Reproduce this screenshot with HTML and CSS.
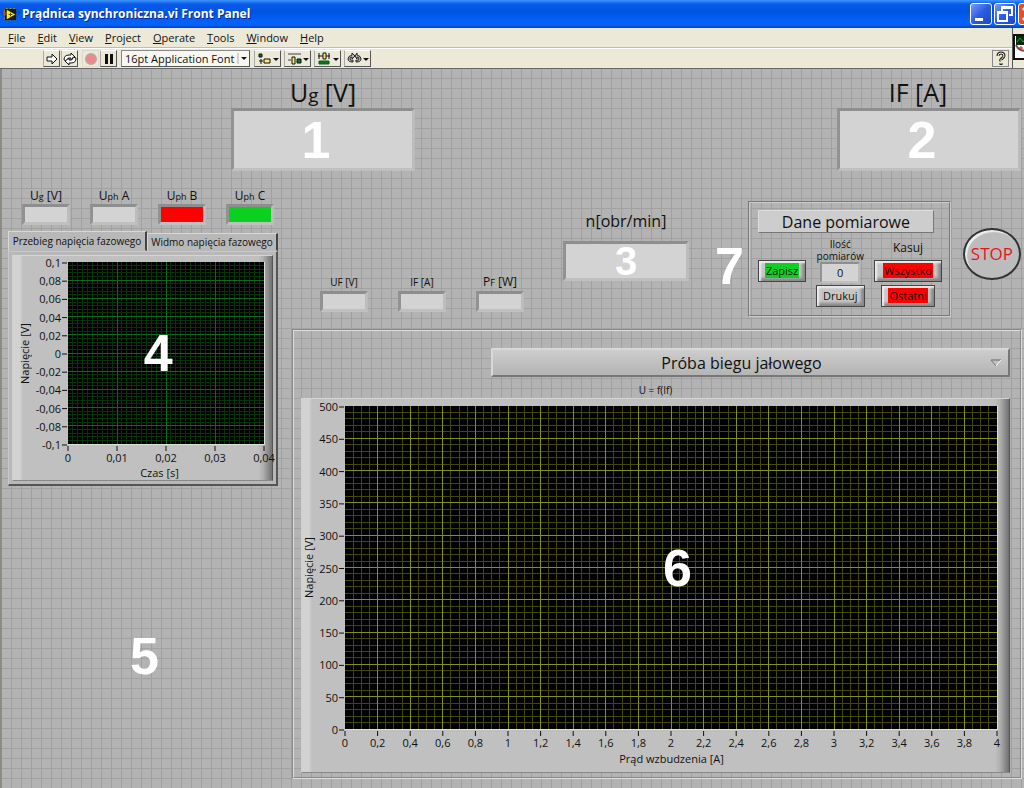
FILE: index.html
```html
<!DOCTYPE html>
<html lang="pl">
<head>
<meta charset="utf-8">
<title>Prądnica synchroniczna.vi Front Panel</title>
<link rel="stylesheet" href="styles.css">
</head>
<body>
<header class="titlebar">
  <svg class="app-icon" viewBox="0 0 16 16" aria-hidden="true">
    <path d="M1 4h14M1 8h14M1 12h14M4 1v14M8 1v14M12 1v14" stroke="#b8a020" stroke-width="2" stroke-dasharray="1 1"/>
    <rect x="2" y="2" width="12" height="12" fill="#1c1c08"/>
    <path d="M4 3l9 5-9 5z" fill="#ffe818"/><path d="M6 8h4M8 6v4" stroke="#4a4000"/>
    <path d="M0 6h3v3" stroke="#e04020" fill="none"/>
  </svg>
  <h1 class="title">Prądnica synchroniczna.vi Front Panel</h1>
  <button class="win-btn" aria-label="Minimize"><svg viewBox="0 0 20 20"><rect x="4" y="14" width="8" height="3" fill="#fff"/></svg></button>
  <button class="win-btn" aria-label="Restore"><svg viewBox="0 0 20 20"><path d="M7 7V3h10v8h-3M7 4h10" fill="none" stroke="#fff" stroke-width="2"/><path d="M3 8h9v9H3zM3 9h9" fill="none" stroke="#fff" stroke-width="2"/></svg></button>
  <button class="win-btn close" aria-label="Close"><svg viewBox="0 0 20 20"><path d="M4 4l12 12M16 4L4 16" stroke="#fff" stroke-width="3"/></svg></button>
</header>
<div class="bars">
  <div class="bars-main">
    <nav class="menubar">
      <button><u>F</u>ile</button><button><u>E</u>dit</button><button><u>V</u>iew</button><button><u>P</u>roject</button><button><u>O</u>perate</button><button><u>T</u>ools</button><button><u>W</u>indow</button><button><u>H</u>elp</button>
    </nav>
    <div class="toolbar">
      <div class="tools">
        <button class="tool" aria-label="Run"><svg width="14" height="14" viewBox="0 0 14 14"><path d="M2 5h5V2l5 5-5 5V9H2z" fill="#fff" stroke="#111"/></svg></button>
        <button class="tool" aria-label="Run continuously"><svg width="14" height="14" viewBox="0 0 14 14"><g fill="#fff" stroke="#111"><path d="M1 8Q1 3 6 3h2V1l4 4-4 3V6H6Q4 6 4 9z"/><path d="M13 6q0 5-5 5H6v2L2 9l4-3v2h2q2 0 2-3z"/></g></svg></button>
      </div>
      <div class="tools">
        <button class="tool flat" aria-label="Abort"><svg width="14" height="14" viewBox="0 0 14 14"><circle cx="7" cy="7" r="5" fill="#f08888" stroke="#c4a098" stroke-width="2"/></svg></button>
        <button class="tool" aria-label="Pause"><svg width="14" height="14" viewBox="0 0 14 14"><path d="M3 2h3v10H3zM8 2h3v10H8z" fill="#111"/></svg></button>
      </div>
      <div class="font-select"><select aria-label="Font"><option>16pt Application Font</option></select><svg width="12" height="13" viewBox="0 0 12 13" aria-hidden="true"><path d="M1 1v11" stroke="#aaa"/><path d="M4 5h6L7 8z" fill="#111"/></svg></div>
      <div class="tools wide">
        <button class="tool" aria-label="Align objects"><svg width="22" height="14" viewBox="0 0 22 14"><path d="M2 2h3v3H2z" fill="#0a7a20" stroke="#111"/><path d="M4 7v5M2 9h4" stroke="#111"/><path d="M7 7h6v4H7z" fill="#ffe870" stroke="#111"/><path d="M16 6h6l-3 3z" fill="#111"/></svg></button>
        <button class="tool" aria-label="Distribute objects"><svg width="22" height="14" viewBox="0 0 22 14"><path d="M1 2h13M1 8h3" stroke="#444"/><path d="M5 5h3v7H5z" fill="#ffe870" stroke="#111"/><path d="M10 7h4v4h-4z" fill="#0a7a20" stroke="#111"/><path d="M16 6h6l-3 3z" fill="#111"/></svg></button>
        <button class="tool" aria-label="Resize objects"><svg width="22" height="14" viewBox="0 0 22 14"><path d="M1 4h12M2 1v6M12 1v6" stroke="#111"/><path d="M6 1h3v6H6z" fill="#ffe870" stroke="#111"/><path d="M2 9h10v3H2z" fill="#0a7a20" stroke="#0a5a18"/><path d="M16 6h6l-3 3z" fill="#111"/></svg></button>
        <button class="tool" aria-label="Reorder"><svg width="22" height="14" viewBox="0 0 22 14"><g fill="#bbb" stroke="#222"><path d="M6 10Q1 10 1 7t4-4V1l3 3-3 3V5Q3 5 3 7t3 1z"/><path d="M9 10q5 0 5-3t-4-4V1L8 4l2 3V5q2 0 2 2T9 8z"/></g><path d="M16 6h6l-3 3z" fill="#111"/></svg></button>
      </div>
      <button class="tool help" aria-label="Context help"><svg width="14" height="15" viewBox="0 0 14 15"><path d="M4 5q0-3 3-3t3 3q0 1-2 2.500T7 10M7 12v2" fill="none" stroke="#222" stroke-width="3"/><path d="M4 5q0-3 3-3t3 3q0 1-2 2.500T7 10M7 12v1" fill="none" stroke="#ffffb0"/></svg></button>
    </div>
  </div>
  <div class="vi-icon"><svg width="20" height="26" viewBox="0 0 20 26" aria-hidden="true"><rect x="1" y="1" width="30" height="24" fill="#fff" stroke="#111" stroke-width="2"/><path d="M3 2h17v9H3z" fill="#0a2a10"/><path d="M4 8l3-4 3 4 3-4" fill="none" stroke="#18a030"/><path d="M3 11q2 5 9 6" fill="none" stroke="#555" stroke-width="2"/><path d="M6 14h4M8 12v5" stroke="#e02020"/></svg></div>
</div>
<main class="panel">
  <section class="meters">
    <div class="field"><label class="label xl" for="ug">U<small>g</small> [V]</label><output class="display big" id="ug"><span class="mark">1</span></output></div>
    <div class="field"><label class="label xl current" for="if">IF [A]</label><output class="display big" id="if"><span class="mark">2</span></output></div>
  </section>
  <div class="columns">
    <section class="left">
      <div class="leds">
        <div class="field"><label class="label" for="l1">U<small>g</small> [V]</label><output class="display small" id="l1"></output></div>
        <div class="field"><label class="label" for="l2">U<small>ph</small> A</label><output class="display small" id="l2"></output></div>
        <div class="field"><label class="label" for="l3">U<small>ph</small> B</label><output class="display small red" id="l3"></output></div>
        <div class="field"><label class="label" for="l4">U<small>ph</small> C</label><output class="display small green" id="l4"></output></div>
      </div>
      <div class="tabs" role="tablist">
        <button class="tab active" role="tab" aria-selected="true">Przebieg napięcia fazowego</button>
        <button class="tab" role="tab" aria-selected="false">Widmo napięcia fazowego</button>
      </div>
      <div class="tab-page">
        <div class="chart phase">
          <div class="y-title">Napięcie [V]</div>
          <div class="plot"><svg id="phase"></svg><span class="mark over phase-mark">4</span></div>
          <div class="x-title">Czas [s]</div>
        </div>
      </div>
      <div class="mark five">5</div>
    </section>
    <section class="right">
      <div class="controls">
        <div class="minis">
          <div class="field"><label class="label sm" for="uf">UF [V]</label><output class="display small" id="uf"></output></div>
          <div class="field"><label class="label sm" for="ifs">IF [A]</label><output class="display small" id="ifs"></output></div>
          <div class="field"><label class="label" for="pf">P<small>F</small> [W]</label><output class="display small" id="pf"></output></div>
        </div>
        <div class="field speed"><label class="label lg" for="n">n[obr/min]</label><output class="display mid" id="n"><span class="mark md">3</span></output></div>
        <span class="mark">7</span>
        <div class="data">
          <h2 class="data-title">Dane pomiarowe</h2>
          <div class="data-row">
            <button class="btn save"><span class="hl ok">Zapisz</span></button>
            <div class="stack">
              <label class="label sm" for="cnt">Ilość<br>pomiarów</label>
              <output class="display count" id="cnt">0</output>
              <button class="btn">Drukuj</button>
            </div>
            <div class="stack">
              <span class="label kasuj">Kasuj</span>
              <button class="btn all"><span class="hl bad">Wszystko</span></button>
              <button class="btn"><span class="hl bad">Ostatni</span></button>
            </div>
          </div>
        </div>
        <button class="stop">STOP</button>
      </div>
      <div class="frame">
        <div class="ring"><select aria-label="Próba"><option>Próba biegu jałowego</option></select><svg width="12" height="8" viewBox="0 0 12 8" aria-hidden="true"><path d="M1 1h10" stroke="#666"/><path d="M1 1l5 6" stroke="#777"/><path d="M11 1L6 7" stroke="#f4f4f4"/></svg></div>
        <div class="caption">U = f(If)</div>
        <div class="chart load">
          <div class="y-title">Napięcie [V]</div>
          <div class="plot"><svg id="load"></svg><span class="mark over load-mark">6</span></div>
          <div class="x-title">Prąd wzbudzenia [A]</div>
        </div>
      </div>
    </section>
  </div>
</main>
<script src="chart.js"></script>
</body>
</html>
```
FILE: styles.css
```css
* { box-sizing: border-box; }
body { margin: 0; min-height: 100vh; display: flex; flex-direction: column; overflow-x: hidden; font-family: "Open Sans", "Noto Sans", sans-serif; font-size: 11px; line-height: 14px; color: #111; background: #b2b2b2; }
button, select { font: inherit; color: inherit; margin: 0; padding: 0; border: 0; background: none; border-radius: 0; }
small { font-size: 75%; line-height: 1; }

.titlebar { display: flex; align-items: center; gap: 2px; height: 28px; padding-left: 3px; overflow: hidden; background: linear-gradient(#3d95ff 0, #0a5ae8 4px, #0053e1 12px, #0460f6 20px, #0462fa 25px, #0240b8 28px); }
.app-icon { width: 15px; height: 15px; flex: none; }
.title { flex: 1; margin: 0 0 0 2px; font-size: 12px; line-height: 20px; font-weight: 700; color: #fff; text-shadow: 1px 1px #0a2a80; white-space: nowrap; }
.win-btn { flex: none; width: 22px; height: 22px; border: 1px solid #fff; border-radius: 3px; background: linear-gradient(135deg, #7a9cf4, #2a5ce0 50%, #1c4ac8); }
.win-btn svg { display: block; width: 20px; height: 20px; }
.win-btn.close { margin-right: -16px; background: #e2502c; }

.bars { display: flex; background: #ece9d8; border-bottom: 1px solid #666; }
.bars-main { flex: 1; border-right: 1px solid #555; }
.menubar { display: flex; gap: 12px; height: 20px; padding-left: 8px; border-bottom: 1px solid #c0bdac; }
.toolbar { display: flex; align-items: center; gap: 4px; height: 20px; padding: 0 3px 0 43px; border-top: 1px solid #fff; }
.tools { display: flex; gap: 1px; }
.tools.wide { gap: 3px; }
.tools.wide .tool { width: 27px; }
.tool { display: flex; align-items: center; justify-content: center; width: 17px; height: 17px; border: 1px solid; border-color: #fff #555 #555 #aaa; }
.tool.flat { border-color: #dedbc8; }
.help { margin-left: auto; border-color: #888; }
.font-select { display: flex; align-items: center; width: 129px; height: 17px; border: 1px solid; border-color: #888 #555 #555 #888; background: #f8f7f0; }
.font-select select { flex: 1; min-width: 0; height: 15px; line-height: 14px; padding-left: 3px; appearance: none; }
.vi-icon { width: 11px; padding-top: 6px; overflow: hidden; background: #ece9d8; }

.panel { flex: 1; padding: 7px 2px 10px 6px; border-left: 2px solid #8c8c84; border-bottom: 1px solid #ddd; background: repeating-linear-gradient(90deg, transparent 0 9px, #a0a0a0 9px 10px), repeating-linear-gradient(transparent 0 9px, #a2a2a2 9px 10px), #b3b3b3; }
.meters { display: flex; justify-content: space-between; padding: 0 1px 0 223px; }
.field { display: flex; flex-direction: column; align-items: center; }
.label { font-size: 12px; line-height: 16px; white-space: nowrap; }
.label.sm { font-size: 10px; line-height: 12px; text-align: center; }
.label.lg { font-size: 16px; line-height: 24px; }
.label.xl { font-size: 25px; line-height: 32px; }
.label.current { padding-right: 22px; }
.display { display: flex; align-items: center; justify-content: center; background: #d3d3d3; border: 3px solid; border-color: #8e8e8e #bcbcbc #c0c0c0 #929292; }
.big { width: 184px; height: 63px; padding-right: 14px; }
.mid { width: 126px; height: 40px; }
.small { width: 48px; height: 21px; }
.red { background: #f00; }
.green { background: #0bd020; }
.mark { font: 700 52px/52px "Liberation Sans", Arial, sans-serif; color: #fff; }
.mark.md { font-size: 40px; line-height: 40px; }

.columns { display: flex; gap: 14px; padding-top: 17px; }
.left { flex: none; width: 270px; }
.leds { display: flex; gap: 20px; padding-left: 14px; }
.tabs { display: flex; align-items: flex-end; margin-top: 6px; font-size: 10px; }
.tab { flex: 1; height: 18px; border: 1px solid; border-color: #d8d8d8 #444 transparent #d8d8d8; border-right-width: 2px; background: #b8b8b8; white-space: nowrap; }
.tab.active { flex: none; width: 139px; height: 20px; }
.tab-page { padding: 3px; background: #b8b8b8; border: 1px solid; border-width: 1px 2px 2px 1px; border-color: #c8c8c8 #555 #555 #c8c8c8; }
.chart { display: grid; grid-template-columns: auto 1fr; background: linear-gradient(90deg, #d2d2d2 0 7px, #c0c0c0 10px calc(100% - 14px), #b0b0b0 calc(100% - 9px), #707070); border: 1px solid; border-color: #d4d4d4 #555 #888 #d0d0d0; font-size: 11px; }
.y-title { writing-mode: vertical-rl; transform: rotate(180deg); text-align: center; }
.plot { position: relative; border-right: 1px solid #ddd; border-bottom: 1px solid #ddd; background: #000; }
.plot svg { display: block; width: 100%; height: 100%; overflow: visible; font-size: 11px; fill: #111; }
.x-title { grid-column: 2; text-align: center; }
.over { position: absolute; top: 50%; transform: translate(-50%, -50%); }
.phase-mark { left: 46%; }
.load-mark { left: 51%; }
.phase { padding: 6px 7px 0 5px; column-gap: 36px; }
.phase .plot { height: 183px; }
.phase .x-title { padding-top: 21px; padding-right: 14px; }
.load { flex: 1; padding: 7px 11px 6px 0; column-gap: 29px; }
.load .plot { height: 324px; }
.load .x-title { padding-top: 22px; }
.five { padding: 144px 0 0 122px; }

.right { flex: 1; min-width: 0; }
.controls { display: flex; padding-left: 28px; height: 141px; padding-top: 13px; }
.minis { display: flex; align-items: flex-end; gap: 30px; margin-bottom: 17px; }
.minis .label { line-height: 18px; }
.speed { margin: 8px 26px 0 39px; gap: 8px; }
.controls > .mark { margin: 39px 4px 0 0; }
.data { flex: none; width: 203px; height: 116px; padding: 7px 7px 0 8px; border: 2px groove #ccc; }
.data-title { margin: 0 8px 0 0; height: 23px; font-size: 16px; line-height: 22px; font-weight: 400; text-align: center; background: #cdcdcd; border: 1px solid; border-color: #ddd #777 #777 #ddd; }
.data-row { display: flex; justify-content: space-between; gap: 8px; }
.stack { display: flex; flex-direction: column; align-items: center; padding-top: 5px; }
.btn { height: 22px; padding: 0 6px; border: 1px solid #444; background: #c6c6c6; box-shadow: inset 2px 2px 2px #eee, inset -3px -3px 3px #888; }
.save { margin-top: 27px; }
.hl { padding: 0 1px; }
.ok { background: #0bd020; }
.bad { background: #f00; }
.count { width: 40px; height: 21px; margin-bottom: 2px; border-width: 2px; }
.kasuj { line-height: 20px; margin-bottom: 2px; }
.all { margin-bottom: 3px; padding: 0 8px; }
.stop { flex: none; width: 58px; height: 52px; margin: 27px 0 0 12px; border: 2px solid #333; border-radius: 50%; background: #bcbcbc; color: #e8141c; font-size: 17px; box-shadow: inset 2px 2px 1px #eee; }
.frame { padding: 17px 10px 4px 7px; border: 2px groove #ddd; }
.ring { display: flex; align-items: center; margin-left: 190px; height: 29px; padding-right: 6px; border: 2px solid; border-color: #d8d8d8 #777 #777 #d8d8d8; background: linear-gradient(#cdcdcd, #b4b4b4); }
.ring select { flex: 1; height: 25px; line-height: 24px; appearance: none; text-align: center; text-align-last: center; font-size: 16px; }
.caption { margin: 6px 0 1px; text-align: center; font-size: 10px; }

.tick { stroke: #111; }
.g-minor { stroke: #06330a; }
.g-major { stroke: #0b6a1c; }
.y-minor { stroke: #43470a; }
.y-major { stroke: #84901a; }
```
FILE: chart.js
```js
function drawPlot(id, prefix, xLabels, yLabels, xMinor, yMinor) {
  const svg = document.getElementById(id);
  const parts = [];
  const line = (x1, y1, x2, y2, cls) => parts.push(`<line x1="${x1}" y1="${y1}" x2="${x2}" y2="${y2}" class="${cls}" shape-rendering="crispEdges"/>`);
  const nx = xLabels.length - 1, ny = yLabels.length - 1;
  for (const major of [false, true]) {
    const cls = prefix + (major ? '-major' : '-minor');
    for (let i = 1; i < nx * xMinor; i++) {
      const p = i * 100 / (nx * xMinor) + '%';
      if ((i % xMinor === 0) === major) line(p, '0%', p, '100%', cls);
    }
    for (let i = 1; i < ny * yMinor; i++) {
      const p = i * 100 / (ny * yMinor) + '%';
      if ((i % yMinor === 0) === major) line('0%', p, '100%', p, cls);
    }
  }
  xLabels.forEach((t, i) => {
    const p = i * 100 / nx + '%';
    parts.push(`<svg x="${p}" y="100%" overflow="visible"><path class="tick" d="M0 2v5"/><text y="18" text-anchor="middle">${t}</text></svg>`);
  });
  yLabels.forEach((t, i) => {
    const p = i * 100 / ny + '%';
    parts.push(`<svg y="${p}" overflow="visible"><path class="tick" d="M-6 1h5"/><text x="-7" y="5" text-anchor="end">${t}</text></svg>`);
  });
  svg.innerHTML = parts.join('');
}
const num = v => String(v).replace('.', ',');
drawPlot('phase', 'g',
  [0, 0.01, 0.02, 0.03, 0.04].map(num),
  [0.1, 0.08, 0.06, 0.04, 0.02, 0, -0.02, -0.04, -0.06, -0.08, -0.1].map(num), 10, 5);
drawPlot('load', 'y',
  Array.from({ length: 21 }, (_, i) => num(i * 2 / 10)),
  Array.from({ length: 11 }, (_, i) => 500 - i * 50), 4, 5);
```
